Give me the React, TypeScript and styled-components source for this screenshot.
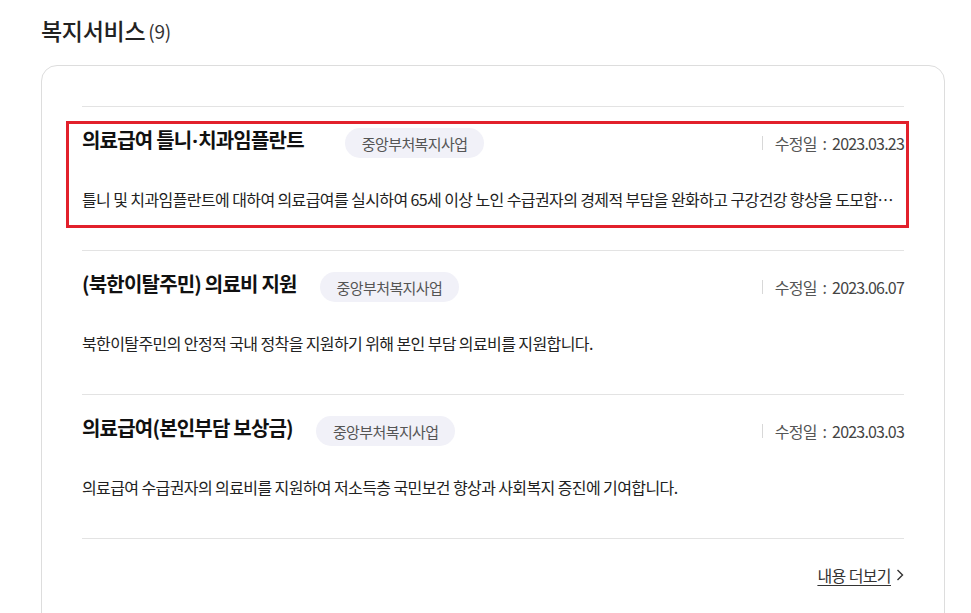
import React from "react";
import styled, { createGlobalStyle } from "styled-components";

const GlobalStyle = createGlobalStyle`
  html, body {
    margin: 0;
    padding: 0;
    background: #ffffff;
    overflow: hidden;
  }
  body {
    font-family: "Noto Sans CJK KR", "Noto Sans", sans-serif;
    color: #222;
  }
  * { box-sizing: border-box; }
`;

const Page = styled.div`
  padding: 15px 26px 0 41px;
`;

const Heading = styled.h2`
  margin: 0 0 20px;
  height: 30px;
  display: flex;
  align-items: center;
  gap: 3px;
  font-size: 23px;
  font-weight: 500;
  letter-spacing: -0.3px;
  color: #222;
`;

const Count = styled.span`
  font-size: 19px;
  font-weight: 400;
  color: #333;
  letter-spacing: -0.3px;
`;

const Card = styled.section`
  border: 1px solid #dddddd;
  border-radius: 16px;
  padding: 40px 40px 60px;
`;

const List = styled.ul`
  list-style: none;
  margin: 0;
  padding: 0;
`;

const Item = styled.li<{ $focused?: boolean }>`
  position: relative;
  border-top: 1px solid #e3e3e3;
  padding: 21px 0 39px;

  ${({ $focused }) =>
    $focused &&
    `
    &::after {
      content: "";
      position: absolute;
      top: 14px;
      left: -16px;
      right: -5px;
      bottom: 22px;
      border: 3px solid #e2202b;
      pointer-events: none;
    }
  `}
`;

const Header = styled.div`
  display: flex;
  align-items: flex-start;
  height: 30px;
`;

const Title = styled.strong`
  font-size: 20px;
  line-height: 24px;
  font-weight: 700;
  letter-spacing: -0.8px;
  color: #111;
  white-space: nowrap;
`;

const Dot = styled.span`
  font-family: "Noto Sans", sans-serif;
  margin: 0 1px;
`;

const Badge = styled.span<{ $gap: number }>`
  margin-left: ${({ $gap }) => $gap}px;
  height: 30px;
  padding: 0 17px;
  border-radius: 15px;
  background: #f1f1f8;
  display: inline-flex;
  align-items: center;
  font-size: 15px;
  letter-spacing: -0.6px;
  color: #555;
  white-space: nowrap;
`;

const DateBox = styled.span`
  margin-left: auto;
  height: 30px;
  display: inline-flex;
  align-items: center;
  font-size: 16px;
  letter-spacing: -0.8px;
  color: #555;
  white-space: nowrap;

  &::before {
    content: "";
    width: 1px;
    height: 14px;
    background: #d8d8d8;
    margin-right: 12px;
  }
`;

const DateLabel = styled.span`
  margin-right: 6px;
  word-spacing: 3px;
`;

const DateValue = styled.span`
  color: #444;
`;

const Desc = styled.p`
  margin: 29px 0 0;
  font-size: 16px;
  line-height: 24px;
  letter-spacing: -0.6px;
  color: #222;
  white-space: nowrap;
  overflow: hidden;
  text-overflow: ellipsis;
`;

const Footer = styled.div`
  border-top: 1px solid #e3e3e3;
  padding-top: 24px;
  display: flex;
  justify-content: flex-end;
`;

const MoreLink = styled.a`
  display: inline-flex;
  align-items: center;
  gap: 5px;
  font-size: 16px;
  letter-spacing: -0.6px;
  color: #333;
  text-decoration: none;
  cursor: pointer;
`;

const MoreText = styled.span`
  text-decoration: underline;
  text-underline-offset: 3px;
`;

const items = [
  {
    title: "의료급여 틀니·치과임플란트",
    badge: "중앙부처복지사업",
    date: "2023.03.23",
    desc:
      "틀니 및 치과임플란트에 대하여 의료급여를 실시하여 65세 이상 노인 수급권자의 경제적 부담을 완화하고 구강건강 향상을 도모합니다.",
    gap: 41,
    focused: true,
  },
  {
    title: "(북한이탈주민) 의료비 지원",
    badge: "중앙부처복지사업",
    date: "2023.06.07",
    desc: "북한이탈주민의 안정적 국내 정착을 지원하기 위해 본인 부담 의료비를 지원합니다.",
    gap: 23,
    focused: false,
  },
  {
    title: "의료급여(본인부담 보상금)",
    badge: "중앙부처복지사업",
    date: "2023.03.03",
    desc: "의료급여 수급권자의 의료비를 지원하여 저소득층 국민보건 향상과 사회복지 증진에 기여합니다.",
    gap: 23,
    focused: false,
  },
];

function renderTitle(title: string) {
  const parts = title.split("·");
  return parts.map((p, i) => (
    <React.Fragment key={i}>
      {i > 0 && <Dot>·</Dot>}
      {p}
    </React.Fragment>
  ));
}

export default function App() {
  return (
    <>
      <GlobalStyle />
      <Page>
        <Heading>
          복지서비스<Count>(9)</Count>
        </Heading>
        <Card>
          <List>
            {items.map((it) => (
              <Item key={it.title} $focused={it.focused}>
                <Header>
                  <Title>{renderTitle(it.title)}</Title>
                  <Badge $gap={it.gap}>{it.badge}</Badge>
                  <DateBox>
                    <DateLabel>수정일 :</DateLabel>
                    <DateValue>{it.date}</DateValue>
                  </DateBox>
                </Header>
                <Desc>{it.desc}</Desc>
              </Item>
            ))}
          </List>
          <Footer>
            <MoreLink>
              <MoreText>내용 더보기</MoreText>
              <svg width="8" height="12" viewBox="0 0 8 12" fill="none">
                <path d="M1.5 1 L6.5 6 L1.5 11" stroke="#333" strokeWidth="1.4" />
              </svg>
            </MoreLink>
          </Footer>
        </Card>
      </Page>
    </>
  );
}
